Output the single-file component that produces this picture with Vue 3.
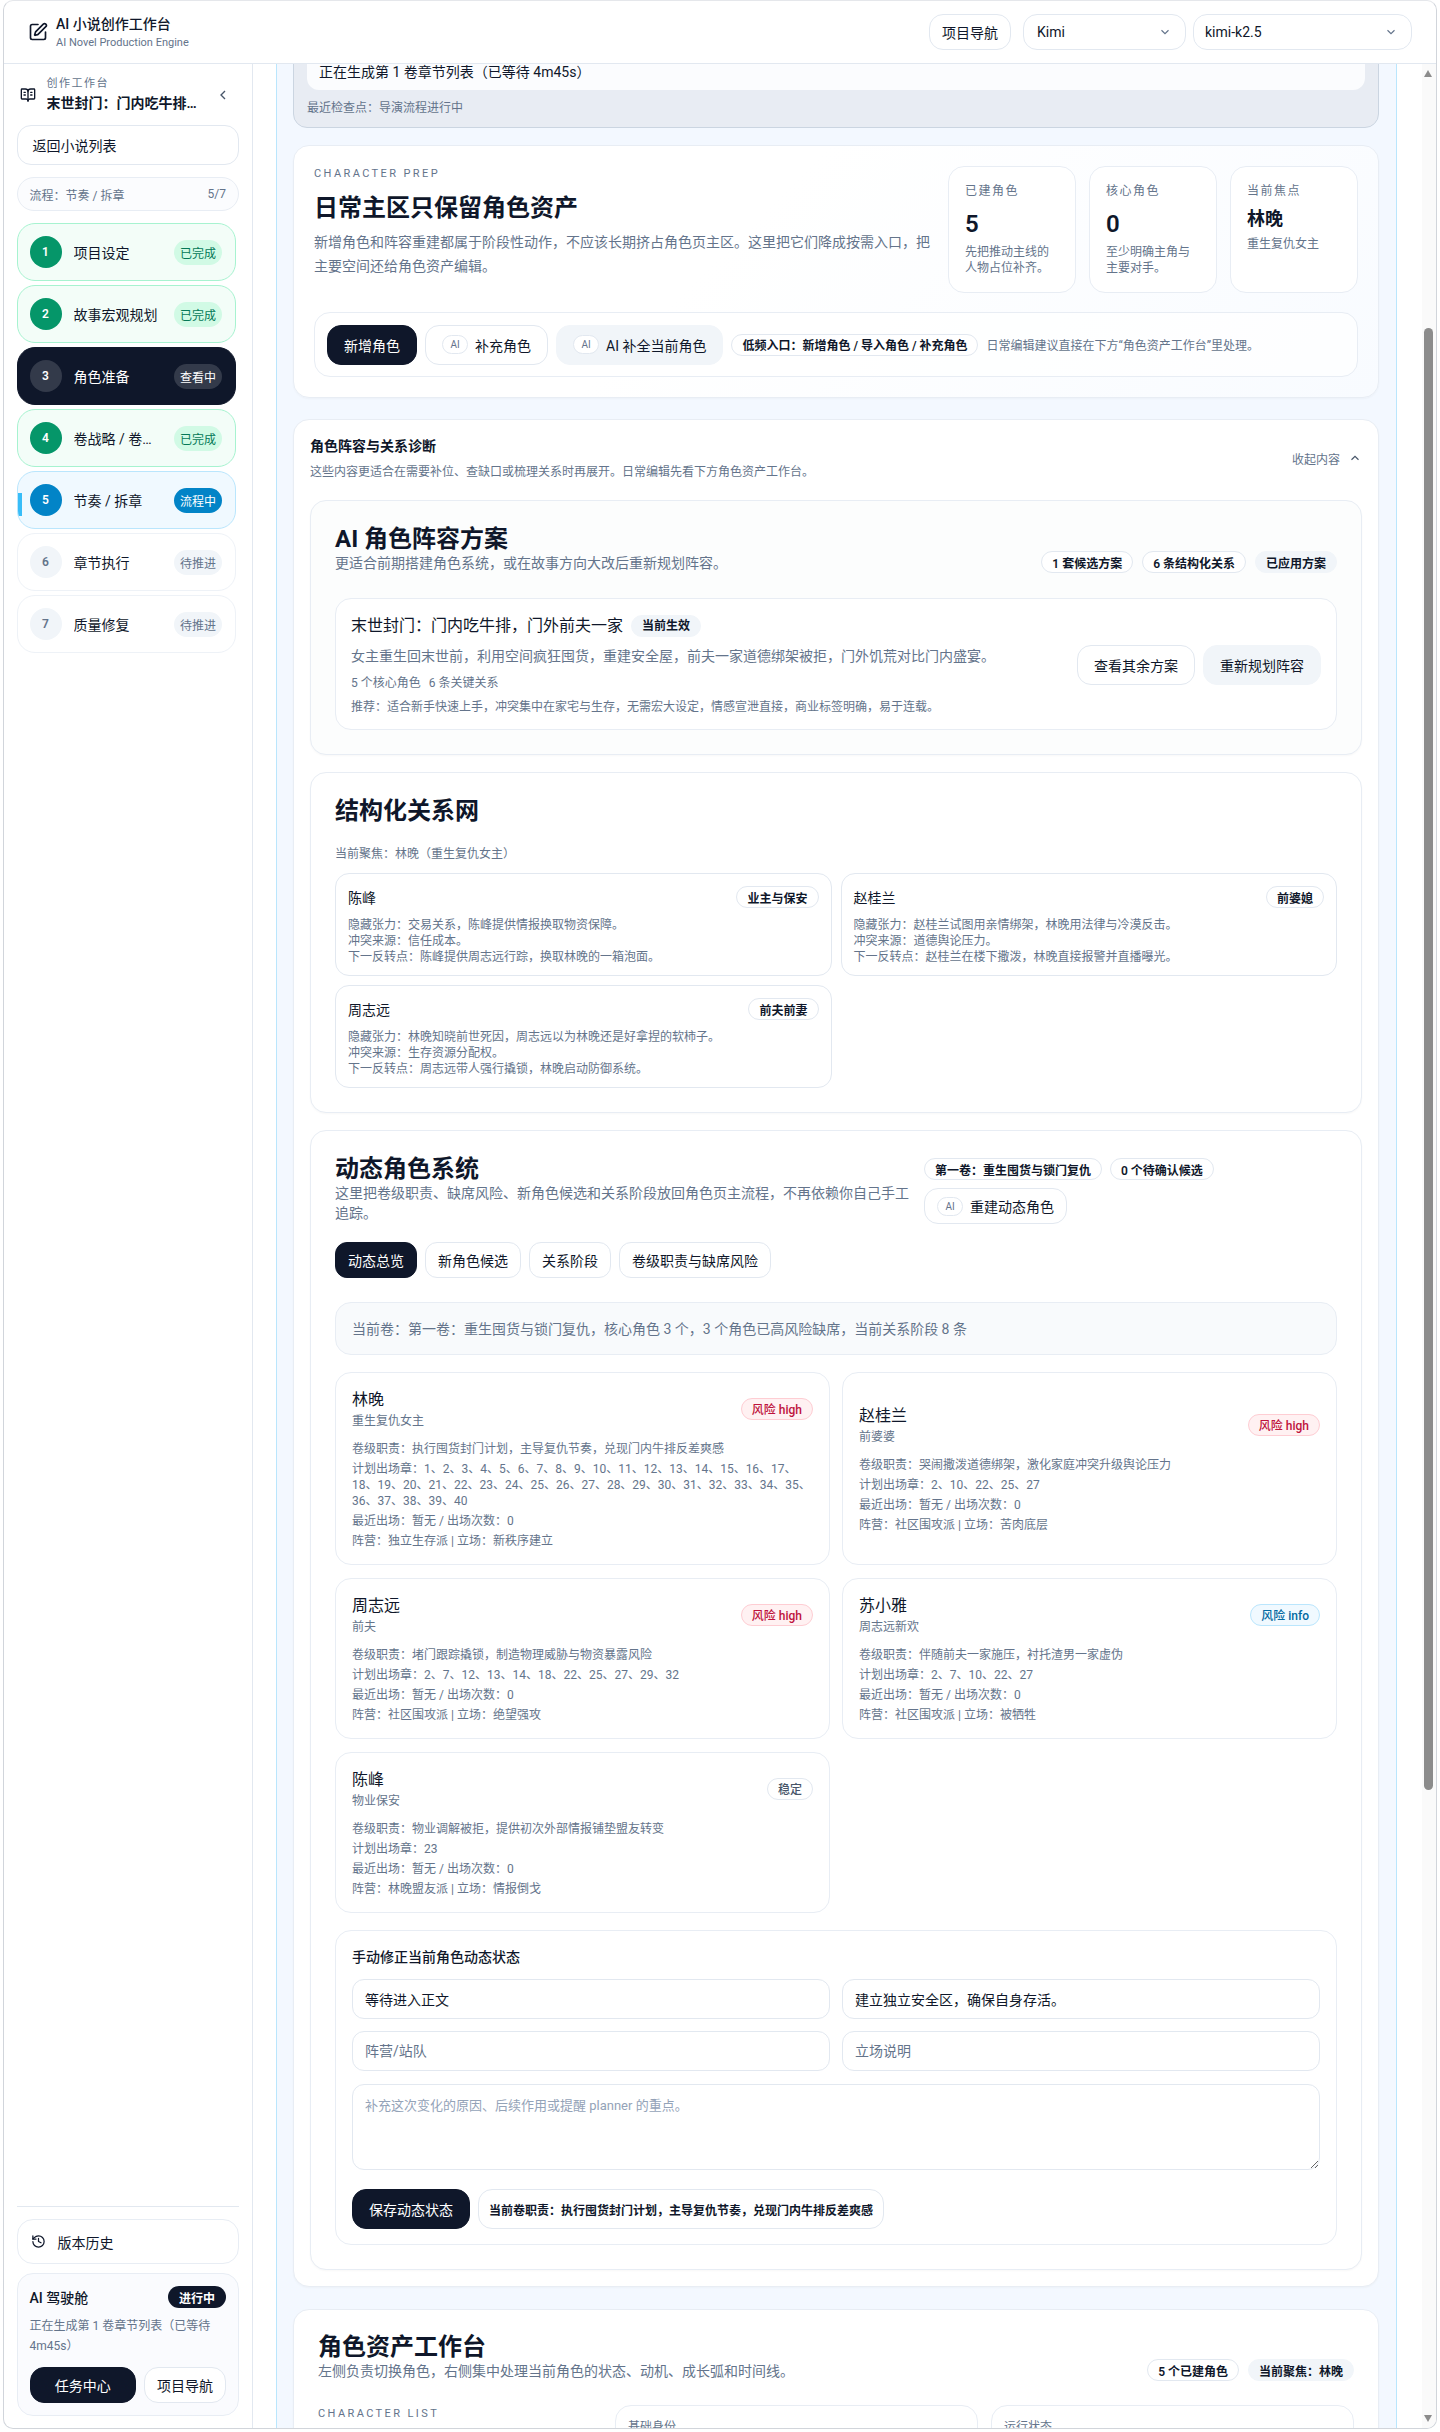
<script setup>
const steps = [
  { n: 1, name: '项目设定', tag: '已完成', state: 'done' },
  { n: 2, name: '故事宏观规划', tag: '已完成', state: 'done' },
  { n: 3, name: '角色准备', tag: '查看中', state: 'viewing' },
  { n: 4, name: '卷战略 / 卷级规划', tag: '已完成', state: 'done' },
  { n: 5, name: '节奏 / 拆章', tag: '流程中', state: 'flow' },
  { n: 6, name: '章节执行', tag: '待推进', state: 'todo' },
  { n: 7, name: '质量修复', tag: '待推进', state: 'todo' }
]

const stats = [
  { label: '已建角色', value: '5', desc: '先把推动主线的人物占位补齐。' },
  { label: '核心角色', value: '0', desc: '至少明确主角与主要对手。' },
  { label: '当前焦点', value: '林晚', desc: '重生复仇女主', focus: true }
]

const relations = [
  {
    name: '陈峰',
    tag: '业主与保安',
    lines: ['隐藏张力：交易关系，陈峰提供情报换取物资保障。', '冲突来源：信任成本。', '下一反转点：陈峰提供周志远行踪，换取林晚的一箱泡面。']
  },
  {
    name: '赵桂兰',
    tag: '前婆媳',
    lines: ['隐藏张力：赵桂兰试图用亲情绑架，林晚用法律与冷漠反击。', '冲突来源：道德舆论压力。', '下一反转点：赵桂兰在楼下撒泼，林晚直接报警并直播曝光。']
  },
  {
    name: '周志远',
    tag: '前夫前妻',
    lines: ['隐藏张力：林晚知晓前世死因，周志远以为林晚还是好拿捏的软柿子。', '冲突来源：生存资源分配权。', '下一反转点：周志远带人强行撬锁，林晚启动防御系统。']
  }
]

const tabs = ['动态总览', '新角色候选', '关系阶段', '卷级职责与缺席风险']

const characters = [
  {
    name: '林晚',
    role: '重生复仇女主',
    risk: '风险 high',
    level: 'high',
    lines: [
      '卷级职责：执行囤货封门计划，主导复仇节奏，兑现门内牛排反差爽感',
      '计划出场章：1、2、3、4、5、6、7、8、9、10、11、12、13、14、15、16、17、\n18、19、20、21、22、23、24、25、26、27、28、29、30、31、32、33、34、35、\n36、37、38、39、40',
      '最近出场：暂无 / 出场次数：0',
      '阵营：独立生存派 | 立场：新秩序建立'
    ]
  },
  {
    name: '赵桂兰',
    role: '前婆婆',
    risk: '风险 high',
    level: 'high',
    lines: [
      '卷级职责：哭闹撒泼道德绑架，激化家庭冲突升级舆论压力',
      '计划出场章：2、10、22、25、27',
      '最近出场：暂无 / 出场次数：0',
      '阵营：社区围攻派 | 立场：苦肉底层'
    ]
  },
  {
    name: '周志远',
    role: '前夫',
    risk: '风险 high',
    level: 'high',
    lines: [
      '卷级职责：堵门跟踪撬锁，制造物理威胁与物资暴露风险',
      '计划出场章：2、7、12、13、14、18、22、25、27、29、32',
      '最近出场：暂无 / 出场次数：0',
      '阵营：社区围攻派 | 立场：绝望强攻'
    ]
  },
  {
    name: '苏小雅',
    role: '周志远新欢',
    risk: '风险 info',
    level: 'info',
    lines: [
      '卷级职责：伴随前夫一家施压，衬托渣男一家虚伪',
      '计划出场章：2、7、10、22、27',
      '最近出场：暂无 / 出场次数：0',
      '阵营：社区围攻派 | 立场：被牺牲'
    ]
  },
  {
    name: '陈峰',
    role: '物业保安',
    risk: '稳定',
    level: 'calm',
    lines: [
      '卷级职责：物业调解被拒，提供初次外部情报铺垫盟友转变',
      '计划出场章：23',
      '最近出场：暂无 / 出场次数：0',
      '阵营：林晚盟友派 | 立场：情报倒戈'
    ]
  }
]
</script>

<template>
  <div class="shell">
    <header class="topbar">
      <div class="brand">
        <svg class="brand-icon" width="20" height="20" viewBox="0 0 24 24" fill="none" stroke="currentColor" stroke-width="2" stroke-linecap="round" stroke-linejoin="round">
          <path d="M12 3H5a2 2 0 0 0-2 2v14a2 2 0 0 0 2 2h14a2 2 0 0 0 2-2v-7"/>
          <path d="M18.375 2.625a1 1 0 0 1 3 3l-9.013 9.014a2 2 0 0 1-.853.505l-2.873.84a.5.5 0 0 1-.62-.62l.84-2.873a2 2 0 0 1 .506-.852z"/>
        </svg>
        <div>
          <div class="brand-title">AI 小说创作工作台</div>
          <div class="brand-sub">AI Novel Production Engine</div>
        </div>
      </div>
      <div class="top-actions">
        <button class="btn nav-btn">项目导航</button>
        <div class="select provider">
          <span>Kimi</span>
          <svg width="14" height="14" viewBox="0 0 24 24" fill="none" stroke="#64748b" stroke-width="2"><path d="m6 9 6 6 6-6"/></svg>
        </div>
        <div class="select model">
          <span>kimi-k2.5</span>
          <svg width="14" height="14" viewBox="0 0 24 24" fill="none" stroke="#64748b" stroke-width="2"><path d="m6 9 6 6 6-6"/></svg>
        </div>
      </div>
    </header>

    <div class="body">
      <aside class="sidebar">
        <div class="side-head">
          <svg class="side-book" width="16" height="16" viewBox="0 0 24 24" fill="none" stroke="currentColor" stroke-width="2" stroke-linecap="round" stroke-linejoin="round">
            <path d="M12 7v14"/><path d="M16 12h2"/><path d="M16 8h2"/>
            <path d="M3 18a1 1 0 0 1-1-1V4a1 1 0 0 1 1-1h5a4 4 0 0 1 4 4 4 4 0 0 1 4-4h5a1 1 0 0 1 1 1v13a1 1 0 0 1-1 1h-6a3 3 0 0 0-3 3 3 3 0 0 0-3-3z"/>
            <path d="M6 12h2"/><path d="M6 8h2"/>
          </svg>
          <div class="side-titles">
            <div class="side-label">创作工作台</div>
            <div class="side-title">末世封门：门内吃牛排，门外前夫一家</div>
          </div>
          <svg class="side-chevron" width="16" height="16" viewBox="0 0 24 24" fill="none" stroke="#475569" stroke-width="2"><path d="m15 18-6-6 6-6"/></svg>
        </div>

        <div class="back-btn">返回小说列表</div>

        <div class="flow-bar">
          <span>流程：节奏 / 拆章</span>
          <span>5/7</span>
        </div>

        <div class="steps">
          <div v-for="s in steps" :key="s.n" class="step" :class="s.state">
            <span class="step-no">{{ s.n }}</span>
            <span class="step-name">{{ s.name }}</span>
            <span class="step-tag">{{ s.tag }}</span>
          </div>
        </div>

        <div class="side-bottom">
          <div class="history">
            <svg width="15" height="15" viewBox="0 0 24 24" fill="none" stroke="currentColor" stroke-width="2" stroke-linecap="round" stroke-linejoin="round">
              <path d="M3 12a9 9 0 1 0 9-9 9.75 9.75 0 0 0-6.74 2.74L3 8"/><path d="M3 3v5h5"/><path d="M12 7v5l4 2"/>
            </svg>
            <span>版本历史</span>
          </div>
          <div class="cockpit">
            <div class="cockpit-head">
              <span class="cockpit-title">AI 驾驶舱</span>
              <span class="cockpit-tag">进行中</span>
            </div>
            <p class="cockpit-desc">正在生成第 1 卷章节列表（已等待 4m45s）</p>
            <div class="cockpit-actions">
              <button class="btn dark task-btn">任务中心</button>
              <button class="btn nav-btn">项目导航</button>
            </div>
          </div>
        </div>
      </aside>

      <main class="main">
        <div class="panel">
          <section class="status-card">
            <div class="status-inner">正在生成第 1 卷章节列表（已等待 4m45s）</div>
            <div class="status-note">最近检查点：导演流程进行中</div>
          </section>

          <section class="card prep">
            <div class="prep-top">
              <div class="prep-copy">
                <div class="eyebrow">CHARACTER PREP</div>
                <h2 class="h-big prep-title">日常主区只保留角色资产</h2>
                <p class="prep-desc">新增角色和阵容重建都属于阶段性动作，不应该长期挤占角色页主区。这里把它们降成按需入口，把主要空间还给角色资产编辑。</p>
              </div>
              <div class="stat-row">
                <div v-for="st in stats" :key="st.label" class="stat">
                  <div class="stat-label">{{ st.label }}</div>
                  <div v-if="st.focus" class="stat-focus">{{ st.value }}</div>
                  <div v-else class="stat-num">{{ st.value }}</div>
                  <div class="stat-desc" :class="{ tight: st.focus }">{{ st.desc }}</div>
                </div>
              </div>
            </div>
            <div class="action-bar">
              <button class="btn dark">新增角色</button>
              <button class="btn"><span class="ai-badge">AI</span>补充角色</button>
              <button class="btn soft"><span class="ai-badge">AI</span>AI 补全当前角色</button>
              <span class="pill">低频入口：新增角色 / 导入角色 / 补充角色</span>
              <span class="note">日常编辑建议直接在下方“角色资产工作台”里处理。</span>
            </div>
          </section>

          <section class="card diagnose">
            <div class="diag-head">
              <div>
                <div class="diag-title">角色阵容与关系诊断</div>
                <div class="diag-desc">这些内容更适合在需要补位、查缺口或梳理关系时再展开。日常编辑先看下方角色资产工作台。</div>
              </div>
              <div class="collapse">
                <span>收起内容</span>
                <svg width="14" height="14" viewBox="0 0 24 24" fill="none" stroke="#475569" stroke-width="2"><path d="m18 15-6-6-6 6"/></svg>
              </div>
            </div>

            <div class="sub lineup">
              <div class="sub-head">
                <div>
                  <h2 class="h-big">AI 角色阵容方案</h2>
                  <p class="sub-desc">更适合前期搭建角色系统，或在故事方向大改后重新规划阵容。</p>
                </div>
                <div class="pills">
                  <span class="pill">1 套候选方案</span>
                  <span class="pill">6 条结构化关系</span>
                  <span class="pill soft-pill">已应用方案</span>
                </div>
              </div>
              <div class="plan">
                <div class="plan-body">
                  <div class="plan-title">
                    <span>末世封门：门内吃牛排，门外前夫一家</span>
                    <span class="pill soft-pill">当前生效</span>
                  </div>
                  <p class="plan-desc">女主重生回末世前，利用空间疯狂囤货，重建安全屋，前夫一家道德绑架被拒，门外饥荒对比门内盛宴。</p>
                  <div class="plan-meta"><span>5 个核心角色</span><span>6 条关键关系</span></div>
                  <p class="plan-rec">推荐：适合新手快速上手，冲突集中在家宅与生存，无需宏大设定，情感宣泄直接，商业标签明确，易于连载。</p>
                </div>
                <div class="plan-actions">
                  <button class="btn">查看其余方案</button>
                  <button class="btn soft">重新规划阵容</button>
                </div>
              </div>
            </div>

            <div class="sub relation">
              <h2 class="h-big">结构化关系网</h2>
              <div class="focus-line">当前聚焦：林晚（重生复仇女主）</div>
              <div class="rel-grid">
                <div v-for="r in relations" :key="r.name" class="rel">
                  <div class="rel-head">
                    <span class="rel-name">{{ r.name }}</span>
                    <span class="pill">{{ r.tag }}</span>
                  </div>
                  <div v-for="l in r.lines" :key="l" class="rel-line">{{ l }}</div>
                </div>
              </div>
            </div>

            <div class="sub dynamic">
              <div class="dyn-head">
                <div class="dyn-copy">
                  <h2 class="h-big">动态角色系统</h2>
                  <p class="sub-desc">这里把卷级职责、缺席风险、新角色候选和关系阶段放回角色页主流程，不再依赖你自己手工追踪。</p>
                </div>
                <div class="dyn-side">
                  <span class="pill">第一卷：重生囤货与锁门复仇</span>
                  <span class="pill">0 个待确认候选</span>
                  <button class="btn rebuild"><span class="ai-badge">AI</span>重建动态角色</button>
                </div>
              </div>

              <div class="tabs">
                <button v-for="(t, i) in tabs" :key="t" class="tab" :class="{ on: i === 0 }">{{ t }}</button>
              </div>

              <div class="summary">当前卷：第一卷：重生囤货与锁门复仇，核心角色 3 个，3 个角色已高风险缺席，当前关系阶段 8 条</div>

              <div class="char-grid">
                <div v-for="c in characters" :key="c.name" class="char">
                  <div class="char-head">
                    <div>
                      <div class="char-name">{{ c.name }}</div>
                      <div class="char-role">{{ c.role }}</div>
                    </div>
                    <span class="risk" :class="c.level">{{ c.risk }}</span>
                  </div>
                  <div v-for="l in c.lines" :key="l" class="char-line">{{ l }}</div>
                </div>
              </div>

              <div class="fix-form">
                <div class="fix-title">手动修正当前角色动态状态</div>
                <div class="fix-grid">
                  <input class="field" value="等待进入正文" />
                  <input class="field" value="建立独立安全区，确保自身存活。" />
                  <input class="field" placeholder="阵营/站队" />
                  <input class="field" placeholder="立场说明" />
                </div>
                <textarea class="area" placeholder="补充这次变化的原因、后续作用或提醒 planner 的重点。"></textarea>
                <div class="fix-actions">
                  <button class="btn dark">保存动态状态</button>
                  <span class="duty">当前卷职责：执行囤货封门计划，主导复仇节奏，兑现门内牛排反差爽感</span>
                </div>
              </div>
            </div>
          </section>

          <section class="card assets">
            <div class="asset-head">
              <div>
                <h2 class="h-big">角色资产工作台</h2>
                <p class="sub-desc">左侧负责切换角色，右侧集中处理当前角色的状态、动机、成长弧和时间线。</p>
              </div>
              <div class="pills">
                <span class="pill">5 个已建角色</span>
                <span class="pill soft-pill">当前聚焦：林晚</span>
              </div>
            </div>
            <div class="asset-body">
              <div class="asset-list">
                <div class="eyebrow list-label">CHARACTER LIST</div>
                <div class="asset-item"></div>
              </div>
              <div class="asset-info"><div class="asset-label">基础身份</div></div>
              <div class="asset-info"><div class="asset-label">运行状态</div></div>
            </div>
          </section>
        </div>

        <!-- 滚动条 -->
        <div class="scroll-track">
          <span class="arrow up"></span>
          <span class="thumb"></span>
          <span class="arrow down"></span>
        </div>
      </main>
    </div>
  </div>
</template>

<style>
html, body {
  margin: 0;
  background: #fff;
}
</style>

<style scoped>
* {
  box-sizing: border-box;
}

.shell {
  width: 1434px;
  height: 2429px;
  margin-left: 3px;
  display: flex;
  flex-direction: column;
  background: #fff;
  border: 1px solid #d1d5db;
  border-top-color: #e5e7eb;
  border-radius: 10px;
  overflow: hidden;
  color: #0f172a;
  font-family: Roboto, "Noto Sans CJK SC", sans-serif;
  font-size: 14px;
}

p, h2 {
  margin: 0;
}

button {
  font-family: inherit;
}

.topbar {
  flex: none;
  height: 63px;
  display: flex;
  align-items: center;
  justify-content: space-between;
  padding: 0 24px;
  border-bottom: 1px solid #e2e8f0;
}

.brand {
  display: flex;
  align-items: center;
  gap: 8px;
}

.brand-title {
  font-weight: 500;
  line-height: 20px;
}

.brand-sub {
  font-size: 11px;
  line-height: 14px;
  color: #64748b;
  margin-top: 2px;
}

.top-actions {
  display: flex;
  gap: 7px;
}

.top-actions .nav-btn {
  margin-right: 5px;
}

.btn {
  display: inline-flex;
  align-items: center;
  justify-content: center;
  height: 40px;
  padding: 0 16px;
  background: #fff;
  border: 1px solid #e2e8f0;
  border-radius: 14px;
  color: #0f172a;
  font-size: 14px;
  white-space: nowrap;
}

.nav-btn {
  width: 82px;
  height: 36px;
  padding: 0;
}

.btn.dark {
  background: #0f172a;
  border-color: #0f172a;
  color: #fff;
}

.btn.soft {
  background: #f1f5f9;
  border-color: #f1f5f9;
}

.select {
  height: 36px;
  display: flex;
  align-items: center;
  justify-content: space-between;
  padding: 0 13px;
  border: 1px solid #e2e8f0;
  border-radius: 14px;
}

.provider {
  width: 163px;
}

.model {
  width: 219px;
  padding-left: 11px;
}

.body {
  flex: 1;
  min-height: 0;
  display: flex;
}

.sidebar {
  flex: none;
  width: 249px;
  display: flex;
  flex-direction: column;
  padding: 0 13px 12px 12.5px;
  border-right: 1px solid #e2e8f0;
}

.side-head {
  display: flex;
  align-items: center;
  padding-top: 12px;
}

.side-book {
  flex: none;
  margin: 0 11px 0 3px;
}

.side-titles {
  width: 154px;
}

.side-label {
  font-size: 11px;
  line-height: 16px;
  letter-spacing: 1.5px;
  color: #64748b;
}

.side-title {
  font-weight: 600;
  line-height: 20px;
  margin-top: 1px;
  white-space: nowrap;
  overflow: hidden;
  text-overflow: ellipsis;
}

.side-chevron {
  margin-left: 14px;
}

.back-btn {
  height: 40px;
  margin-top: 12px;
  padding: 0 15px;
  display: flex;
  align-items: center;
  border: 1px solid #e2e8f0;
  border-radius: 14px;
}

.flow-bar {
  height: 34px;
  margin-top: 12px;
  padding: 0 12px;
  display: flex;
  align-items: center;
  justify-content: space-between;
  font-size: 12px;
  color: #64748b;
  background: #fbfcfe;
  border: 1px solid #e8edf4;
  border-radius: 17px;
}

.steps {
  display: flex;
  flex-direction: column;
  gap: 4px;
  margin-top: 12px;
  margin-right: 3px;
}

.step {
  position: relative;
  height: 58px;
  display: flex;
  align-items: center;
  gap: 12px;
  padding: 0 13px 0 12px;
  border: 1px solid #eef2f7;
  border-radius: 18px;
  overflow: hidden;
}

.step-no {
  flex: none;
  width: 32px;
  height: 32px;
  display: flex;
  align-items: center;
  justify-content: center;
  border-radius: 50%;
  font-size: 12px;
  font-weight: 600;
  background: #f1f5f9;
  color: #64748b;
}

.step-name {
  flex: 1;
  min-width: 0;
  white-space: nowrap;
  overflow: hidden;
  text-overflow: ellipsis;
}

.step-tag {
  flex: none;
  width: 48px;
  height: 25px;
  display: flex;
  align-items: center;
  justify-content: center;
  border-radius: 13px;
  font-size: 12px;
  background: #f1f5f9;
  color: #64748b;
}

.step.done {
  background: #f3fdf8;
  border-color: #a7f3d0;
}

.step.done .step-no {
  background: #059669;
  color: #fff;
}

.step.done .step-tag {
  background: #d1fae5;
  color: #047857;
}

.step.viewing {
  background: #0f172a;
  border-color: #0f172a;
  color: #fff;
}

.step.viewing .step-no,
.step.viewing .step-tag {
  background: #333a4a;
  color: #fff;
}

.step.flow {
  background: #f0f9ff;
  border-color: #bae6fd;
}

.step.flow::before {
  content: "";
  position: absolute;
  left: 0;
  top: 21px;
  width: 4px;
  height: 23px;
  background: #38bdf8;
}

.step.flow .step-no,
.step.flow .step-tag {
  background: #0284c7;
  color: #fff;
}

.side-bottom {
  margin-top: auto;
  padding-top: 12px;
  border-top: 1px solid #e2e8f0;
}

.history {
  height: 45px;
  display: flex;
  align-items: center;
  gap: 12px;
  padding: 0 13px;
  border: 1px solid #e8edf4;
  border-radius: 16px;
}

.cockpit {
  margin-top: 9px;
  padding: 12px;
  background: #fafbfe;
  border: 1px solid #e8edf4;
  border-radius: 16px;
}

.cockpit-head {
  display: flex;
  align-items: center;
  justify-content: space-between;
  height: 22px;
}

.cockpit-title {
  font-weight: 500;
}

.cockpit-tag {
  width: 58px;
  height: 22px;
  display: flex;
  align-items: center;
  justify-content: center;
  border-radius: 11px;
  background: #0f172a;
  color: #fff;
  font-size: 12px;
  font-weight: 600;
}

.cockpit-desc {
  margin-top: 8px;
  font-size: 12px;
  line-height: 20px;
  color: #64748b;
}

.cockpit-actions {
  display: flex;
  gap: 8px;
  margin-top: 11px;
}

.task-btn {
  flex: 1;
  height: 36px;
  padding: 0;
}

.main {
  position: relative;
  flex: 1;
  min-width: 0;
  padding: 0 39px 0 23px;
  overflow: hidden;
}

.panel {
  padding: 0 17px 0 16px;
  min-height: 100%;
  background: #f3f8ff;
  border-left: 1px solid #bae6fd;
  border-right: 1px solid #bae6fd;
}

.status-card {
  margin-top: -31px;
  padding: 13px 13px 11px;
  background: #e8ecf3;
  border: 1px solid #cbd5e1;
  border-radius: 14px;
}

.status-inner {
  padding: 15px 12px 8px;
  line-height: 20px;
  background: #fbfcfe;
  border-radius: 12px;
}

.status-note {
  margin-top: 10px;
  font-size: 12px;
  line-height: 16px;
  color: #64748b;
}

.card {
  background: #fff;
  border: 1px solid #e8edf4;
  border-radius: 16px;
  box-shadow: 0 1px 2px rgba(15, 23, 42, 0.03);
}

.prep {
  margin-top: 17px;
  padding: 20px;
  background: linear-gradient(135deg, #fff 40%, #f8fbff);
}

.prep-top {
  display: flex;
  justify-content: space-between;
}

.prep-copy {
  width: 624px;
}

.eyebrow {
  font-size: 11px;
  line-height: 16px;
  letter-spacing: 2.4px;
  color: #64748b;
}

.h-big {
  font-size: 24px;
  line-height: 28px;
  font-weight: 700;
  color: #0f172a;
}

.prep-title {
  margin-top: 12px;
}

.prep-desc {
  margin-top: 8px;
  line-height: 24px;
  color: #64748b;
}

.stat-row {
  display: grid;
  grid-template-columns: repeat(3, 128px);
  gap: 13px;
  height: 125px;
}

.stat {
  padding: 16px;
  background: #fff;
  border: 1px solid #e8edf4;
  border-radius: 16px;
}

.stat-label {
  font-size: 12px;
  line-height: 16px;
  letter-spacing: 1.5px;
  color: #64748b;
}

.stat-num {
  margin-top: 9px;
  font-size: 24px;
  line-height: 32px;
  font-weight: 600;
}

.stat-focus {
  margin-top: 8px;
  font-size: 18px;
  line-height: 24px;
  font-weight: 700;
}

.stat-desc {
  margin-top: 4px;
  font-size: 12px;
  line-height: 16px;
  color: #64748b;
}

.stat-desc.tight {
  margin-top: 5px;
}

.action-bar {
  display: flex;
  align-items: center;
  gap: 8px;
  margin-top: 21px;
  padding: 12px;
  height: 65px;
  background: rgba(255, 255, 255, 0.7);
  border: 1px solid #e8edf4;
  border-radius: 16px;
}

.ai-badge {
  flex: none;
  width: 26px;
  height: 19px;
  display: inline-flex;
  align-items: center;
  justify-content: center;
  margin-right: 7px;
  font-size: 10px;
  color: #64748b;
  background: #fff;
  border: 1px solid #e2e8f0;
  border-radius: 10px;
}

.pill {
  flex: none;
  display: inline-flex;
  align-items: center;
  height: 22px;
  padding: 0 10px;
  font-size: 12px;
  font-weight: 600;
  white-space: nowrap;
  background: #fff;
  border: 1px solid #e2e8f0;
  border-radius: 11px;
}

.soft-pill {
  background: #f1f5f9;
  border-color: #f1f5f9;
}

.note {
  font-size: 12px;
  color: #64748b;
  white-space: nowrap;
}

.diagnose {
  margin-top: 21px;
  padding: 16px;
}

.diag-head {
  display: flex;
  justify-content: space-between;
  align-items: center;
}

.diag-title {
  font-weight: 600;
  line-height: 20px;
}

.diag-desc {
  margin-top: 8px;
  font-size: 12px;
  line-height: 16px;
  color: #64748b;
}

.collapse {
  display: flex;
  align-items: center;
  gap: 8px;
  font-size: 12px;
  color: #64748b;
}

.sub {
  margin-top: 17px;
  padding: 24px;
  background: #fff;
  border: 1px solid #e8edf4;
  border-radius: 16px;
  box-shadow: 0 1px 2px rgba(15, 23, 42, 0.03);
}

.lineup {
  margin-top: 20px;
  background: #fcfdfd;
}

.sub-head {
  display: flex;
  align-items: flex-end;
  justify-content: space-between;
}

.sub-desc {
  line-height: 20px;
  color: #64748b;
}

.pills {
  display: flex;
  gap: 9px;
}

.plan {
  display: flex;
  align-items: center;
  justify-content: space-between;
  margin-top: 25px;
  padding: 15px 15px 14px;
  background: #fff;
  border: 1px solid #e8edf4;
  border-radius: 16px;
}

.plan-title {
  display: flex;
  align-items: center;
  gap: 8px;
  font-size: 16px;
  line-height: 24px;
}

.plan-desc {
  margin-top: 8px;
  line-height: 20px;
  color: #64748b;
}

.plan-meta {
  display: flex;
  gap: 8px;
  margin-top: 9px;
  font-size: 12px;
  line-height: 16px;
  color: #64748b;
}

.plan-rec {
  margin-top: 8px;
  font-size: 12px;
  line-height: 16px;
  color: #64748b;
}

.plan-actions {
  display: flex;
  gap: 8px;
}

.focus-line {
  margin-top: 21px;
  font-size: 12px;
  line-height: 16px;
  color: #64748b;
}

.rel-grid {
  display: grid;
  grid-template-columns: 1fr 1fr;
  gap: 9px;
  margin-top: 11px;
}

.rel {
  padding: 12px 12px 10px;
  border: 1px solid #e2e8f0;
  border-radius: 14px;
}

.rel-head {
  display: flex;
  align-items: center;
  justify-content: space-between;
  margin-bottom: 9px;
}

.rel-line {
  font-size: 12px;
  line-height: 16px;
  color: #64748b;
}

.dyn-head {
  display: flex;
  justify-content: space-between;
}

.dyn-copy {
  width: 579px;
}

.dyn-side {
  flex: none;
  width: 413px;
  display: flex;
  flex-wrap: wrap;
  align-content: flex-start;
  gap: 8px;
  padding-top: 3px;
}

.rebuild {
  height: 36px;
  padding: 0 12px;
}

.tabs {
  display: flex;
  gap: 8px;
  margin-top: 18px;
}

.tab {
  height: 36px;
  padding: 0 12px;
  background: #fff;
  border: 1px solid #e2e8f0;
  border-radius: 12px;
  color: #0f172a;
  font-size: 14px;
}

.tab.on {
  background: #0f172a;
  border-color: #0f172a;
  color: #fff;
}

.summary {
  margin-top: 24px;
  padding: 16px 16px 15px;
  line-height: 20px;
  color: #64748b;
  background: #f8fafc;
  border: 1px solid #e8edf4;
  border-radius: 16px;
}

.char-grid {
  display: grid;
  grid-template-columns: 1fr 1fr;
  gap: 13px 12px;
  margin-top: 17px;
}

.char {
  display: flex;
  flex-direction: column;
  justify-content: center;
  padding: 15px 16px;
  border: 1px solid #e8edf4;
  border-radius: 16px;
}

.char-head {
  display: flex;
  align-items: center;
  justify-content: space-between;
  margin-bottom: 12px;
}

.char-name {
  font-size: 16px;
  line-height: 24px;
}

.char-role {
  font-size: 12px;
  line-height: 16px;
  margin-top: 1px;
  color: #64748b;
}

.char-line {
  font-size: 12px;
  line-height: 16px;
  color: #64748b;
  white-space: pre;
}

.char-line + .char-line {
  margin-top: 4px;
}

.risk {
  flex: none;
  height: 22px;
  padding: 0 10px;
  display: inline-flex;
  align-items: center;
  font-size: 12px;
  font-weight: 500;
  border: 1px solid #e2e8f0;
  border-radius: 11px;
}

.risk.high {
  color: #be123c;
  background: #fff1f2;
  border-color: #fecdd3;
}

.risk.info {
  color: #0369a1;
  background: #f0f9ff;
  border-color: #bae6fd;
}

.risk.calm {
  color: #475569;
  background: #fff;
}

.fix-form {
  margin-top: 17px;
  padding: 16px 16px 15px;
  border: 1px solid #e8edf4;
  border-radius: 16px;
}

.fix-title {
  line-height: 20px;
  font-weight: 500;
}

.fix-grid {
  display: grid;
  grid-template-columns: 1fr 1fr;
  gap: 12px;
  margin-top: 12px;
}

.field {
  height: 40px;
  width: 100%;
  padding: 0 12px;
  font-family: inherit;
  font-size: 14px;
  color: #0f172a;
  background: #fff;
  border: 1px solid #e2e8f0;
  border-radius: 12px;
  outline: none;
}

.field::placeholder {
  color: #64748b;
}

.area {
  display: block;
  width: 100%;
  height: 86px;
  margin-top: 13px;
  padding: 12px;
  font-family: inherit;
  font-size: 13px;
  line-height: 18px;
  background: #fff;
  border: 1px solid #e2e8f0;
  border-radius: 12px;
  outline: none;
}

.area::placeholder {
  color: #94a3b8;
}

.fix-actions {
  display: flex;
  align-items: center;
  gap: 8px;
  margin-top: 19px;
}

.duty {
  height: 40px;
  padding: 0 10px;
  display: inline-flex;
  align-items: center;
  font-size: 12px;
  font-weight: 600;
  background: #fff;
  border: 1px solid #e2e8f0;
  border-radius: 14px;
}

.assets {
  margin-top: 22px;
  padding: 23px 24px;
  height: 300px;
}

.asset-head {
  display: flex;
  align-items: flex-end;
  justify-content: space-between;
}

.asset-body {
  display: grid;
  grid-template-columns: 284px 1fr 1fr;
  gap: 13px;
  margin-top: 24px;
}

.asset-list {
  padding-right: 8px;
}

.list-label {
  margin-top: 1px;
}

.asset-item {
  height: 80px;
  margin-top: 6px;
  background: #0f172a;
  border-radius: 16px;
}

.asset-info {
  height: 120px;
  padding: 12px;
  border: 1px solid #e8edf4;
  border-radius: 16px;
}

.asset-label {
  font-size: 12px;
  line-height: 16px;
  padding-top: 1px;
  color: #64748b;
}

.scroll-track {
  position: absolute;
  top: 0;
  right: 0;
  bottom: 0;
  width: 14px;
  background: #fafafa;
}

.thumb {
  position: absolute;
  top: 264px;
  left: 2px;
  width: 9px;
  height: 1462px;
  background: #8c8c8c;
  border-radius: 5px;
}

.arrow {
  position: absolute;
  left: 2px;
  width: 0;
  height: 0;
  border-left: 4.5px solid transparent;
  border-right: 4.5px solid transparent;
}

.arrow.up {
  top: 6px;
  border-bottom: 7px solid #8c8c8c;
}

.arrow.down {
  bottom: 6px;
  border-top: 7px solid #8c8c8c;
}
</style>
